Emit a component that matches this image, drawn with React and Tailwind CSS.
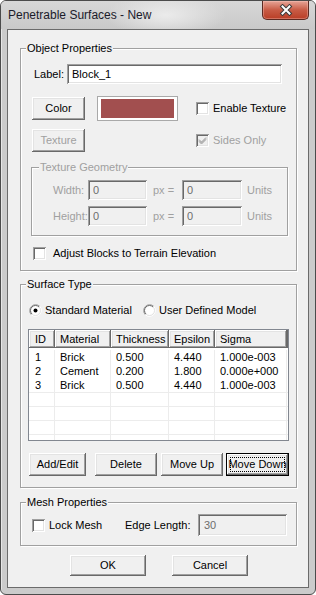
import React from "react";

const raised =
  "bg-[#f0f0f0] shadow-[inset_-1px_-1px_0_#696969,inset_1px_1px_0_#ffffff,inset_-2px_-2px_0_#a0a0a0,inset_2px_2px_0_#e3e3e3]";
const sunken =
  "shadow-[inset_1px_1px_0_#a0a0a0,inset_-1px_-1px_0_#ffffff,inset_2px_2px_0_#696969,inset_-2px_-2px_0_#e3e3e3]";

function Btn({ children, className = "", disabled, focused }) {
  return (
    <button
      type="button"
      className={`flex shrink-0 items-center justify-center ${raised} ${
        disabled ? "text-[#a0a0a0]" : "text-black"
      } ${
        focused
          ? "border border-black outline-1 outline-dotted outline-black outline-offset-[-5px]"
          : ""
      } ${className}`}
    >
      {children}
    </button>
  );
}

function Check({ checked, disabled }) {
  return (
    <span
      className={`flex h-[13px] w-[13px] shrink-0 items-center justify-center ${sunken} ${
        disabled ? "bg-[#f0f0f0]" : "bg-white"
      }`}
    >
      {checked && (
        <svg width="9" height="9" viewBox="0 0 9 9">
          <path
            d="M1 3.5 L3.5 6 L8 1.5 M1 4.5 L3.5 7 L8 2.5 M1 5.5 L3.5 8 L8 3.5"
            stroke={disabled ? "#a0a0a0" : "#000"}
            strokeWidth="1"
            fill="none"
          />
        </svg>
      )}
    </span>
  );
}

function Radio({ checked }) {
  return (
    <svg width="13" height="13" viewBox="0 0 13 13" className="shrink-0">
      <circle cx="6.5" cy="6.5" r="5" fill="#fff" />
      <path d="M10.74 2.26 A6 6 0 0 0 2.26 10.74" stroke="#a0a0a0" fill="none" />
      <path d="M10.74 2.26 A6 6 0 0 1 2.26 10.74" stroke="#fff" fill="none" />
      <path d="M10.04 2.96 A5 5 0 0 0 2.96 10.04" stroke="#696969" fill="none" />
      <path d="M10.04 2.96 A5 5 0 0 1 2.96 10.04" stroke="#e3e3e3" fill="none" />
      {checked && <circle cx="6.5" cy="6.5" r="2" fill="#000" />}
    </svg>
  );
}

function Edit({ value, disabled, className = "" }) {
  return (
    <input
      readOnly
      value={value}
      className={`shrink-0 outline-none ${sunken} ${
        disabled ? "bg-[#f0f0f0] text-[#6d6d6d]" : "bg-white text-black"
      } ${className}`}
    />
  );
}

function Group({ title, disabled, className = "", legend = "ml-[5px]", children }) {
  return (
    <fieldset
      className={`border border-[#a0a0a0] p-0 shadow-[1px_1px_0_#ffffff,inset_1px_1px_0_#ffffff] ${className}`}
    >
      <legend
        className={`${legend} bg-[#f0f0f0] px-[1px] leading-[13px] ${
          disabled ? "text-[#a0a0a0]" : "text-black"
        }`}
      >
        {title}
      </legend>
      {children}
    </fieldset>
  );
}

const cols = [
  { name: "ID", w: "w-[26px] pl-[6px]" },
  { name: "Material", w: "w-[56px] pl-[5px]" },
  { name: "Thickness", w: "w-[58px] pl-[5px]" },
  { name: "Epsilon", w: "w-[46px] pl-[5px]" },
  { name: "Sigma", w: "w-[72px] pl-[5px]" },
];

const rows = [
  ["1", "Brick", "0.500", "4.440", "1.000e-003"],
  ["2", "Cement", "0.200", "1.800", "0.000e+000"],
  ["3", "Brick", "0.500", "4.440", "1.000e-003"],
];

export default function App() {
  return (
    <div className="flex h-[595px] w-[316px] flex-col overflow-hidden rounded-[6px] border border-[#4b4b4b] bg-[#cbcbcb] font-['Liberation_Sans',Arial,sans-serif] text-[11px] leading-[13px] shadow-[inset_1px_1px_0_#e6e6e6]">
      {/* title bar */}
      <div className="flex h-[28px] shrink-0 items-start justify-between bg-[radial-gradient(ellipse_60px_22px_at_165px_14px,#ebebeb,transparent),linear-gradient(to_bottom,#d7d7d7,#c9c9c9)]">
        <span className="ml-[7px] mt-[7px] text-[12px] leading-[14px] text-[#1b1b2a]">
          Penetrable Surfaces - New
        </span>
        <div className="mr-[6px] flex h-[19px] w-[47px] items-center justify-center rounded-b-[5px] border border-t-0 border-[#5c2a22] bg-gradient-to-b from-[#e6a497] via-[#c85b45] to-[#b93d25] shadow-[inset_0_0_0_1px_rgba(255,210,200,0.35)]">
          <svg width="14" height="12" viewBox="0 0 14 12">
            <path d="M3.5 2.5 L10.5 9.5 M10.5 2.5 L3.5 9.5" stroke="#3b3b3b" strokeWidth="4" strokeLinecap="square" />
            <path d="M3.5 2.5 L10.5 9.5 M10.5 2.5 L3.5 9.5" stroke="#fff" strokeWidth="2" strokeLinecap="square" />
          </svg>
        </div>
      </div>

      {/* client */}
      <div className="mx-[6px] mb-[6px] flex flex-1 flex-col border border-[#6b6b6b] bg-[#f0f0f0] text-black">
        <Group title="Object Properties" className="ml-[12px] mt-[12px] w-[277px]">
          <div className="pb-[10px] pt-[9px]">
            <div className="flex h-[20px] items-center">
              <span className="ml-[13px] w-[33px]">Label:</span>
              <Edit value="Block_1" className="h-[20px] w-[215px] px-[5px]" />
            </div>

            <div className="mt-[11px] flex h-[27px] items-center">
              <Btn className="ml-[11px] h-[23px] w-[53px]">Color</Btn>
              <div className="ml-[12px] h-[25px] w-[81px] border border-[#a9a9a9] bg-white px-[3px] py-[2px]">
                <div className="h-full w-full bg-[#a24f4f]" />
              </div>
              <span className="ml-[18px] flex items-center">
                <Check />
                <span className="ml-[4px]">Enable Texture</span>
              </span>
            </div>

            <div className="mt-[7px] flex h-[23px] items-center">
              <Btn disabled className="ml-[11px] h-[23px] w-[53px]">
                Texture
              </Btn>
              <span className="ml-[111px] flex items-center text-[#a0a0a0]">
                <Check checked disabled />
                <span className="ml-[4px]">Sides Only</span>
              </span>
            </div>

            <Group
              title="Texture Geometry"
              disabled
              legend="ml-[7px]"
              className="ml-[10px] mt-[9px] w-[257px]"
            >
              <div className="pb-[9px] pt-[6px] text-[#a0a0a0]">
                {["Width:", "Height:"].map((l, i) => (
                  <div key={l} className={`flex h-[20px] items-center ${i ? "mt-[6px]" : ""}`}>
                    <span className="ml-[21px] w-[35px]">{l}</span>
                    <Edit value="0" disabled className="h-[20px] w-[59px] px-[5px]" />
                    <span className="ml-[6px] w-[23px]">px =</span>
                    <Edit value="0" disabled className="ml-[6px] h-[20px] w-[60px] px-[5px]" />
                    <span className="ml-[5px]">Units</span>
                  </div>
                ))}
              </div>
            </Group>

            <div className="mt-[11px] flex h-[13px] items-center">
              <span className="ml-[12px]">
                <Check />
              </span>
              <span className="ml-[7px]">Adjust Blocks to Terrain Elevation</span>
            </div>
          </div>
        </Group>

        <Group title="Surface Type" className="ml-[12px] mt-[7px] w-[277px]">
          <div className="pb-[11px] pt-[13px]">
            <div className="flex h-[13px] items-center">
              <span className="ml-[8px] flex w-[114px] items-center">
                <Radio checked />
                <span className="ml-[3px]">Standard Material</span>
              </span>
              <span className="flex items-center">
                <Radio />
                <span className="ml-[3px]">User Defined Model</span>
              </span>
            </div>

            <div className="ml-[7px] mt-[12px] h-[112px] w-[261px] overflow-hidden border border-[#828790] bg-white">
              <div className="flex h-[18px]">
                {cols.map((c) => (
                  <div key={c.name} className={`flex shrink-0 items-center ${raised} ${c.w}`}>
                    {c.name}
                  </div>
                ))}
                <div className={`flex-1 ${raised}`} />
              </div>
              <div className="pt-[2px]">
                {rows.map((r, i) => (
                  <div key={i} className="flex h-[14px] items-center">
                    {r.map((v, j) => (
                      <div
                        key={j}
                        className={`h-full shrink-0 border-r border-[#ececec] leading-[14px] ${cols[j].w}`}
                      >
                        {v}
                      </div>
                    ))}
                  </div>
                ))}
                {[0, 1, 2, 3].map((i) => (
                  <div key={i} className="flex h-[14px] border-t border-[#ececec]">
                    {cols.map((c) => (
                      <div key={c.name} className={`h-full shrink-0 border-r border-[#ececec] ${c.w}`} />
                    ))}
                  </div>
                ))}
              </div>
            </div>

            <div className="mt-[12px] flex h-[23px] items-center">
              <Btn className="ml-[8px] h-[23px] w-[57px]">Add/Edit</Btn>
              <Btn className="ml-[9px] h-[23px] w-[62px]">Delete</Btn>
              <Btn className="ml-[4px] h-[23px] w-[62px]">Move Up</Btn>
              <Btn focused className="ml-[3px] h-[23px] w-[63px]">
                Move Down
              </Btn>
            </div>
          </div>
        </Group>

        <Group title="Mesh Properties" className="ml-[12px] mt-[8px] w-[277px]">
          <div className="pb-[9px] pt-[5px]">
            <div className="flex h-[22px] items-center">
              <span className="ml-[11px] flex w-[93px] items-center">
                <Check />
                <span className="ml-[4px]">Lock Mesh</span>
              </span>
              <span className="w-[73px]">Edge Length:</span>
              <Edit value="30" disabled className="h-[22px] w-[89px] px-[6px]" />
            </div>
          </div>
        </Group>

        <div className="mt-[9px] flex">
          <Btn className="ml-[62px] h-[21px] w-[76px]">OK</Btn>
          <Btn className="ml-[26px] h-[21px] w-[76px]">Cancel</Btn>
        </div>
      </div>
    </div>
  );
}
